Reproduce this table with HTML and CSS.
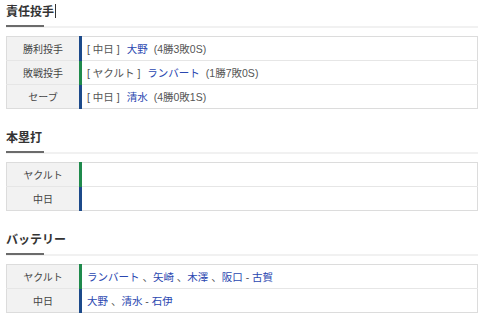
FILE: index.html
```html
<!DOCTYPE html>
<html lang="ja">
<head>
<meta charset="utf-8">
<link rel="stylesheet" href="styles.css">
</head>
<body>
<div class="page">
  <section class="sec sec-first">
    <h2 class="sec-title">責任投手<span class="caret"></span></h2>
    <table class="tbl">
      <tr>
        <th class="lbl">勝利投手</th>
        <td class="val dragons"><span class="team">[ 中日 ]</span><a class="pl gap">大野</a><span class="rec">(4勝3敗0S)</span></td>
      </tr>
      <tr>
        <th class="lbl">敗戦投手</th>
        <td class="val swallows"><span class="team">[ ヤクルト ]</span><a class="pl gap">ランバート</a><span class="rec">(1勝7敗0S)</span></td>
      </tr>
      <tr>
        <th class="lbl">セーブ</th>
        <td class="val dragons"><span class="team">[ 中日 ]</span><a class="pl gap">清水</a><span class="rec">(4勝0敗1S)</span></td>
      </tr>
    </table>
  </section>

  <section class="sec">
    <h2 class="sec-title">本塁打</h2>
    <table class="tbl">
      <tr>
        <th class="lbl">ヤクルト</th>
        <td class="val swallows"></td>
      </tr>
      <tr>
        <th class="lbl">中日</th>
        <td class="val dragons"></td>
      </tr>
    </table>
  </section>

  <section class="sec">
    <h2 class="sec-title">バッテリー</h2>
    <table class="tbl">
      <tr>
        <th class="lbl">ヤクルト</th>
        <td class="val swallows"><a class="pl">ランバート</a><span class="sep"> 、</span><a class="pl">矢崎</a><span class="sep"> 、</span><a class="pl">木澤</a><span class="sep"> 、</span><a class="pl">阪口</a><span class="sep"> - </span><a class="pl">古賀</a></td>
      </tr>
      <tr>
        <th class="lbl">中日</th>
        <td class="val dragons"><a class="pl">大野</a><span class="sep"> 、</span><a class="pl">清水</a><span class="sep"> - </span><a class="pl">石伊</a></td>
      </tr>
    </table>
  </section>
</div>
</body>
</html>
```

FILE: styles.css
```css
html, body {
  margin: 0;
  padding: 0;
  background: #fff;
}

body {
  font-family: "Liberation Sans", "Noto Sans CJK JP", sans-serif;
  color: #444;
}

.page {
  width: 472px;
  padding: 2px 0 0 6px;
}

.sec {
  margin-top: 19px;
}

.sec-first {
  margin-top: 0;
}

.sec-title {
  position: relative;
  margin: 0 0 8px;
  padding: 0 0 4px;
  font-size: 12px;
  line-height: 20px;
  font-weight: bold;
  color: #333;
  border-bottom: 2px solid #f1f1f1;
}

.sec-title::after {
  content: "";
  position: absolute;
  left: 0;
  bottom: -1px;
  width: 38px;
  height: 2px;
  background: #6b6b6b;
}

.caret {
  display: inline-block;
  width: 1px;
  height: 14px;
  background: #333;
  vertical-align: -2px;
  margin-left: 1px;
}

.tbl {
  width: 100%;
  border-collapse: collapse;
  border: 1px solid #dcdcdc;
  font-size: 10px;
}

.tbl tr {
  border-bottom: 1px solid #e6e6e6;
}

.tbl tr:last-child {
  border-bottom: none;
}

.lbl {
  width: 72px;
  height: 23px;
  padding: 0;
  background: #f2f2f2;
  font-weight: normal;
  text-align: center;
  color: #444;
}

.val {
  padding: 0 0 0 5px;
  text-align: left;
  color: #555;
  background: #fff;
  font-size: 10.5px;
}

.dragons {
  border-left: 3px solid #1c4a8a;
}

.swallows {
  border-left: 3px solid #1f8a4c;
}

.pl {
  color: #2a47b0;
  text-decoration: none;
}

.gap {
  margin: 0 6px 0 7px;
}

.sep {
  color: #555;
}
```
